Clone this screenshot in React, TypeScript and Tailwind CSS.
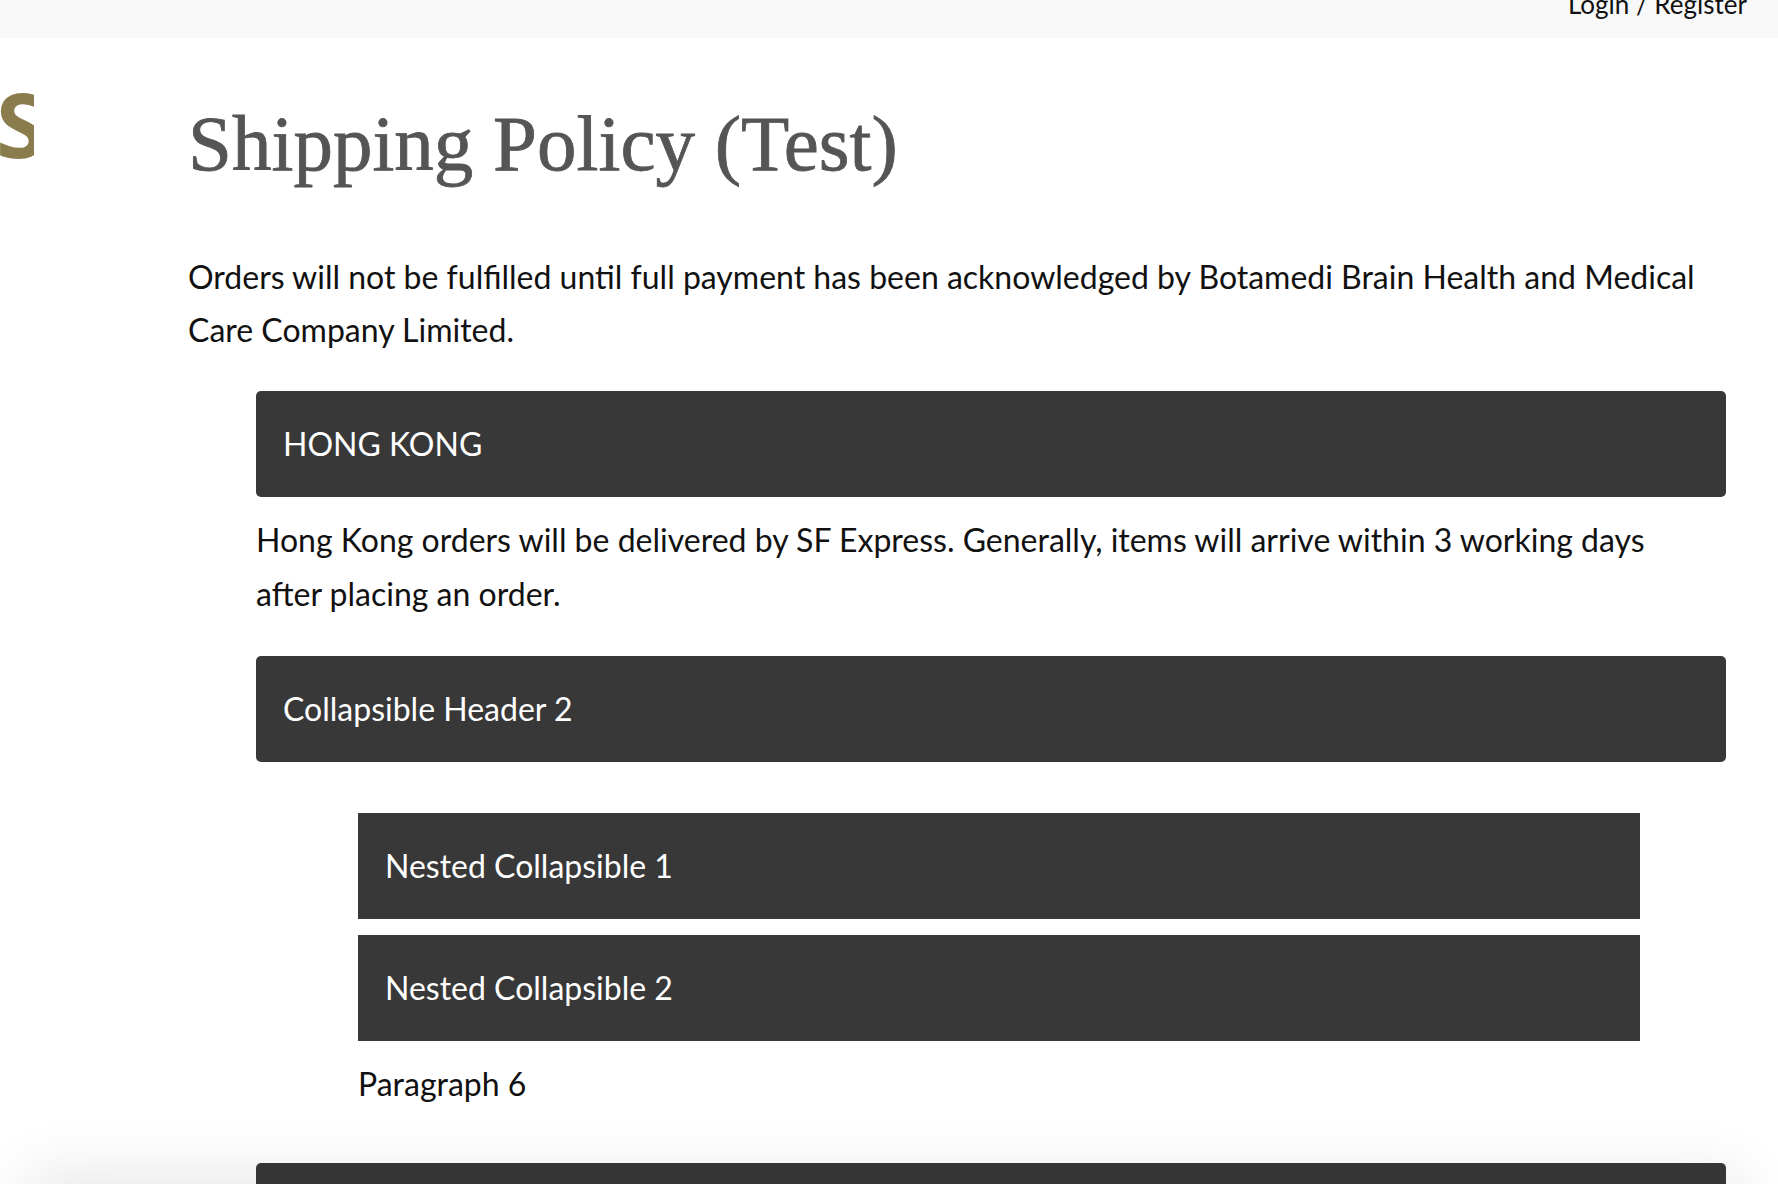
import { type ReactNode } from 'react';

const sans = "font-['Lato','Open_Sans',sans-serif]";

function Bar({ children, nested = false }: { children: ReactNode; nested?: boolean }) {
    return (
        <div
            className={`flex h-[106px] items-center bg-[#383838] pl-[27px] text-[32px] text-white ${
                nested ? 'w-[1282px]' : 'w-[1470px] rounded-[5px]'
            }`}
        >
            {children}
        </div>
    );
}

export default function App() {
    return (
        <div className={`relative h-[1184px] overflow-hidden bg-white text-[#111] ${sans}`}>
            {/* top bar */}
            <header className="flex h-[38px] justify-end overflow-hidden bg-[#f8f8f8] pr-[31px]">
                <span className="-mt-[11px] text-[26px] leading-[30px] text-[#111]">Login / Register</span>
            </header>

            <div className="flex">
                {/* logo edge */}
                <div className="w-[34px] shrink-0 overflow-hidden">
                    <div className="-ml-[4px] mt-[40px] font-['Open_Sans',sans-serif] text-[90px] font-bold leading-none text-[#8a7c4d]">
                        S
                    </div>
                </div>

                <main className="ml-[154px] w-[1540px]">
                    <h1 className="mt-[58px] font-['Liberation_Serif',serif] text-[79px] leading-[96px] text-[#555] [-webkit-text-stroke:0.8px_#555]">
                        Shipping Policy (Test)
                    </h1>

                    <p className="mt-[58px] w-[1530px] text-[32px] leading-[53px]">
                        Orders will not be fulfilled until full payment has been acknowledged by Botamedi Brain Health and Medical Care Company Limited.
                    </p>

                    <div className="ml-[68px] mt-[35px]">
                        <Bar>HONG KONG</Bar>
                        <p className="mt-[16px] w-[1440px] text-[32px] leading-[54px]">
                            Hong Kong orders will be delivered by SF Express. Generally, items will arrive within 3 working days after placing an order.
                        </p>

                        <div className="mt-[35px]">
                            <Bar>Collapsible Header 2</Bar>
                        </div>

                        <div className="ml-[102px] mt-[51px] flex flex-col gap-[16px]">
                            <Bar nested>Nested Collapsible 1</Bar>
                            <Bar nested>Nested Collapsible 2</Bar>
                            <p className="text-[32px] leading-[54px]">Paragraph 6</p>
                        </div>

                        <div className="mt-[52px]">
                            <Bar>Collapsible Header 3</Bar>
                        </div>
                    </div>
                </main>
            </div>

            {/* floating bar just below the fold casts this shadow */}
            <div className="pointer-events-none absolute left-[30px] right-[40px] top-[1190px] h-[60px] rounded-[20px] bg-white shadow-[0_-10px_60px_10px_rgba(0,0,0,0.09)]" />
        </div>
    );
}
